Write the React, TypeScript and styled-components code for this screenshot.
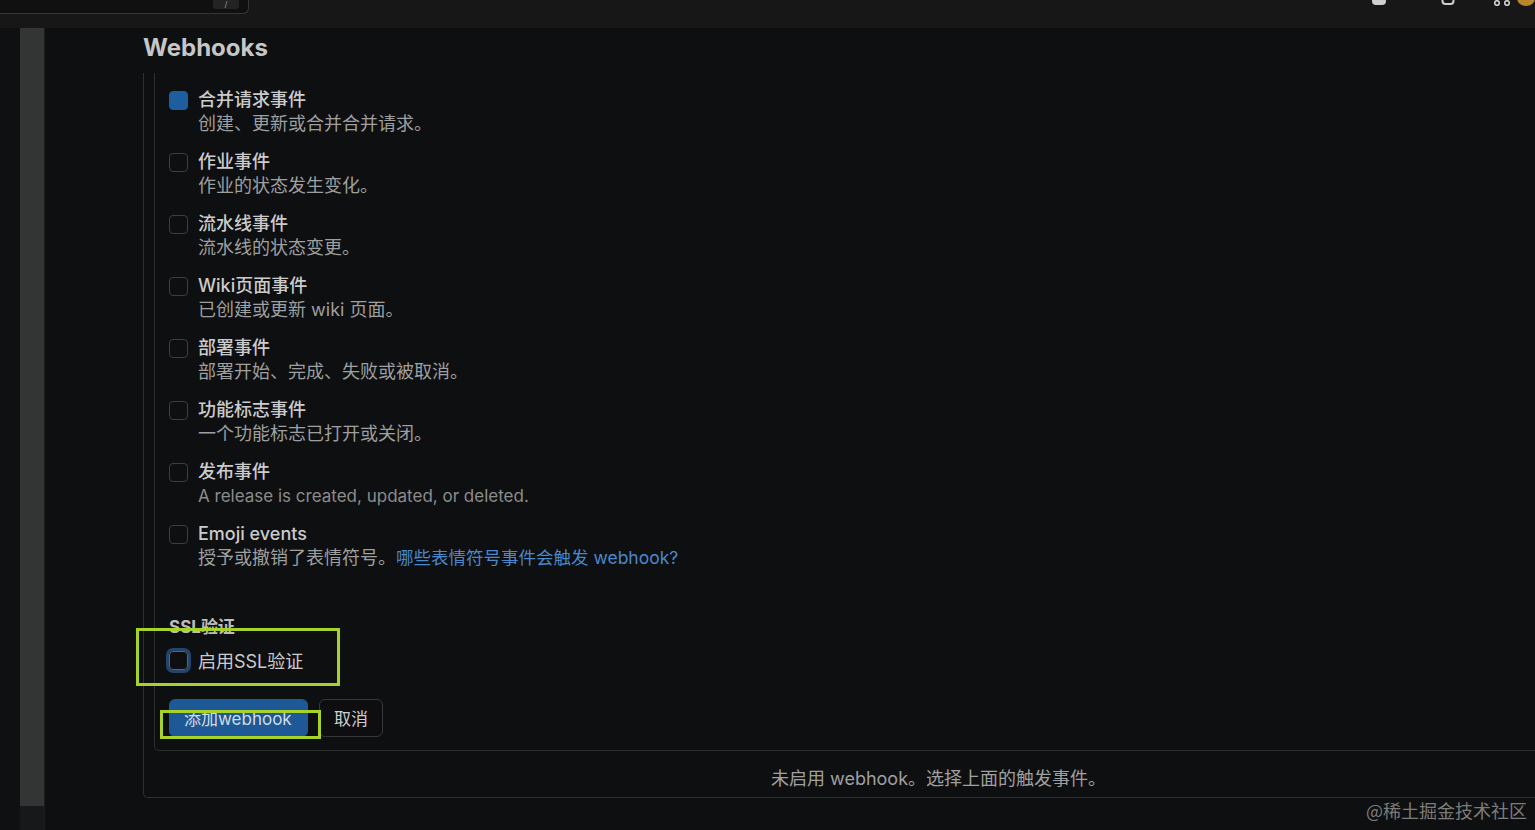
import styled, { createGlobalStyle } from "styled-components";

type EventType = {
  title: string;
  desc: string;
  latin?: boolean;
  checked?: boolean;
  link?: string;
};

const events: EventType[] = [
  { title: "合并请求事件", desc: "创建、更新或合并合并请求。", checked: true },
  { title: "作业事件", desc: "作业的状态发生变化。" },
  { title: "流水线事件", desc: "流水线的状态变更。" },
  { title: "Wiki页面事件", desc: "已创建或更新 wiki 页面。" },
  { title: "部署事件", desc: "部署开始、完成、失败或被取消。" },
  { title: "功能标志事件", desc: "一个功能标志已打开或关闭。" },
  { title: "发布事件", desc: "A release is created, updated, or deleted.", latin: true },
  { title: "Emoji events", desc: "授予或撤销了表情符号。", link: "哪些表情符号事件会触发 webhook?" },
];

export default function App() {
  return (
    <Page>
      <GlobalStyle />
      <TopBar>
        <SearchBox>
          <KeyHint>/</KeyHint>
        </SearchBox>
        <TopIcons>
          <svg width="16" height="16" viewBox="0 0 16 16">
            <rect x="1" y="0" width="14" height="16" rx="4" fill="#cfcfcf" />
          </svg>
          <svg width="14" height="16" viewBox="0 0 14 16">
            <rect x="1.5" y="0" width="11" height="14" rx="3" fill="none" stroke="#cfcfcf" strokeWidth="2" />
          </svg>
          <svg width="22" height="16" viewBox="0 0 22 16">
            <circle cx="4" cy="13" r="2.3" fill="none" stroke="#cfcfcf" strokeWidth="1.6" />
            <circle cx="14" cy="13" r="2.3" fill="none" stroke="#cfcfcf" strokeWidth="1.6" />
          </svg>
          <Avatar />
        </TopIcons>
      </TopBar>
      <Body>
        <Gutter />
        <ScrollTrack>
          <Thumb />
        </ScrollTrack>
        <Main>
          <Heading>Webhooks</Heading>
          <OuterBox>
            <InnerBox>
              <EventList>
                {events.map((ev) => (
                  <EventItem key={ev.title}>
                    <CheckBox $checked={ev.checked} />
                    <EventText>
                      <EventTitle>{ev.title}</EventTitle>
                      <EventDesc $latin={ev.latin}>
                        {ev.desc}
                        {ev.link && <Link>{ev.link}</Link>}
                      </EventDesc>
                    </EventText>
                  </EventItem>
                ))}
              </EventList>
              <SectionLabel>SSL验证</SectionLabel>
              <CheckRow>
                <CheckBox $focus />
                <CheckLabel>启用SSL验证</CheckLabel>
              </CheckRow>
              <Actions>
                <PrimaryButton>添加webhook</PrimaryButton>
                <Button>取消</Button>
              </Actions>
            </InnerBox>
            <Footer>未启用 webhook。选择上面的触发事件。</Footer>
          </OuterBox>
        </Main>
      </Body>
      <Marker style={{ left: 136, top: 628, width: 204, height: 58 }} />
      <Marker style={{ left: 160, top: 710, width: 161, height: 29 }} />
      <Watermark>@稀土掘金技术社区</Watermark>
    </Page>
  );
}

const GlobalStyle = createGlobalStyle`
  body {
    margin: 0;
    background: #0e0f11;
    font-family: Inter, "Noto Sans CJK SC", sans-serif;
    overflow: hidden;
  }
`;

const Page = styled.div`
  position: relative;
  width: 1535px;
  height: 830px;
  display: flex;
  flex-direction: column;
  overflow: hidden;
  background: #0e0f11;
`;

const TopBar = styled.header`
  height: 28px;
  flex-shrink: 0;
  background: #171717;
  display: flex;
  align-items: flex-start;
`;

const SearchBox = styled.div`
  width: 249px;
  height: 14px;
  background: #101011;
  border: 1px solid #353535;
  border-top: none;
  border-left: none;
  border-bottom-right-radius: 6px;
  display: flex;
  justify-content: flex-end;
  padding-right: 9px;
  box-sizing: border-box;
`;

const KeyHint = styled.span`
  width: 26px;
  height: 9px;
  background: #232323;
  border-radius: 0 0 3px 3px;
  color: #9a9a9a;
  font-size: 8px;
  line-height: 8px;
  text-align: center;
`;

const TopIcons = styled.div`
  margin-left: auto;
  margin-top: -10px;
  display: flex;
  align-items: flex-start;
  svg:nth-child(1) {
    margin-right: 54px;
    margin-top: -1px;
  }
  svg:nth-child(2) {
    margin-right: 38px;
  }
`;

const Avatar = styled.div`
  width: 18px;
  height: 16px;
  margin-left: 2px;
  border-radius: 50%;
  background: #b8862b;
`;

const Body = styled.div`
  flex: 1;
  display: flex;
  min-height: 0;
`;

const Gutter = styled.div`
  width: 20px;
  background: #0f1012;
`;

const ScrollTrack = styled.div`
  width: 24px;
  border-right: 1px solid #1c1d1f;
  background: #17181a;
  display: flex;
  flex-direction: column;
`;

const Thumb = styled.div`
  height: 778px;
  background: #333534;
`;

const Main = styled.main`
  flex: 1;
  min-width: 0;
  padding-left: 98px;
  display: flex;
  flex-direction: column;
  overflow: hidden;
`;

const Heading = styled.h2`
  margin: 0;
  height: 45px;
  padding-top: 2px;
  box-sizing: border-box;
  font-size: 24px;
  line-height: 36px;
  font-weight: 700;
  color: #c6c6c6;
`;

const OuterBox = styled.section`
  width: 1580px;
  flex-shrink: 0;
  border-left: 1px solid #2e2f31;
  border-bottom: 1px solid #2e2f31;
  border-bottom-left-radius: 5px;
  padding-left: 10px;
  box-sizing: border-box;
`;

const InnerBox = styled.div`
  border-left: 1px solid #2e2f31;
  border-bottom: 1px solid #2e2f31;
  border-bottom-left-radius: 5px;
  padding: 15px 0 13px 14px;
`;

const EventList = styled.div`
  display: flex;
  flex-direction: column;
  gap: 14px;
`;

const EventItem = styled.label`
  display: flex;
  gap: 10px;
  align-items: flex-start;
`;

const CheckBox = styled.span<{ $checked?: boolean; $focus?: boolean }>`
  flex-shrink: 0;
  width: 19px;
  height: 19px;
  margin-top: 3px;
  box-sizing: border-box;
  border-radius: 4px;
  border: 1px solid ${(p) => (p.$checked ? "#1e5e9e" : p.$focus ? "#5c6470" : "#3d3e40")};
  background: ${(p) => (p.$checked ? "#1e5e9e" : "transparent")};
  box-shadow: ${(p) => (p.$focus ? "0 0 0 3px #23446b" : "none")};
`;

const EventText = styled.div`
  display: flex;
  flex-direction: column;
`;

const EventTitle = styled.span`
  font-size: 18px;
  line-height: 24px;
  font-weight: 500;
  color: #cbcbcb;
`;

const EventDesc = styled.span<{ $latin?: boolean }>`
  font-size: ${(p) => (p.$latin ? "17px" : "18px")};
  line-height: 24px;
  color: ${(p) => (p.$latin ? "#8c8c8c" : "#9f9f9f")};
`;

const Link = styled.span`
  color: #4a88cb;
  font-size: 17.5px;
`;

const SectionLabel = styled.div`
  margin-top: 45px;
  font-size: 17px;
  line-height: 24px;
  font-weight: 700;
  color: #bdbdbd;
`;

const CheckRow = styled.label`
  margin-top: 9px;
  display: flex;
  align-items: center;
  gap: 10px;
  height: 24px;
  & > span:first-child {
    margin-top: 0;
  }
`;

const CheckLabel = styled.span`
  font-size: 18px;
  color: #cbcbcb;
`;

const Actions = styled.div`
  margin-top: 27px;
  display: flex;
  gap: 11px;
`;

const Button = styled.button`
  height: 38px;
  padding: 0 14px 2px;
  border: 1px solid #363738;
  border-radius: 6px;
  background: #0e0e10;
  color: #cfcfcf;
  font-family: inherit;
  font-size: 17px;
  white-space: nowrap;
`;

const PrimaryButton = styled(Button)`
  width: 139px;
  text-align: left;
  border-color: #1c5996;
  background: #1c5996;
  color: #d6dbe2;
`;

const Footer = styled.div`
  padding: 16px 0 6px;
  line-height: 24px;
  font-size: 18px;
  color: #a0a0a0;
  text-align: center;
`;

const Marker = styled.div`
  position: absolute;
  border: 3px solid #a6d22a;
  box-sizing: border-box;
  pointer-events: none;
`;

const Watermark = styled.div`
  position: absolute;
  right: 8px;
  bottom: 7px;
  font-size: 18px;
  color: #7c7c7c;
  font-family: "Noto Sans CJK SC", sans-serif;
`;
